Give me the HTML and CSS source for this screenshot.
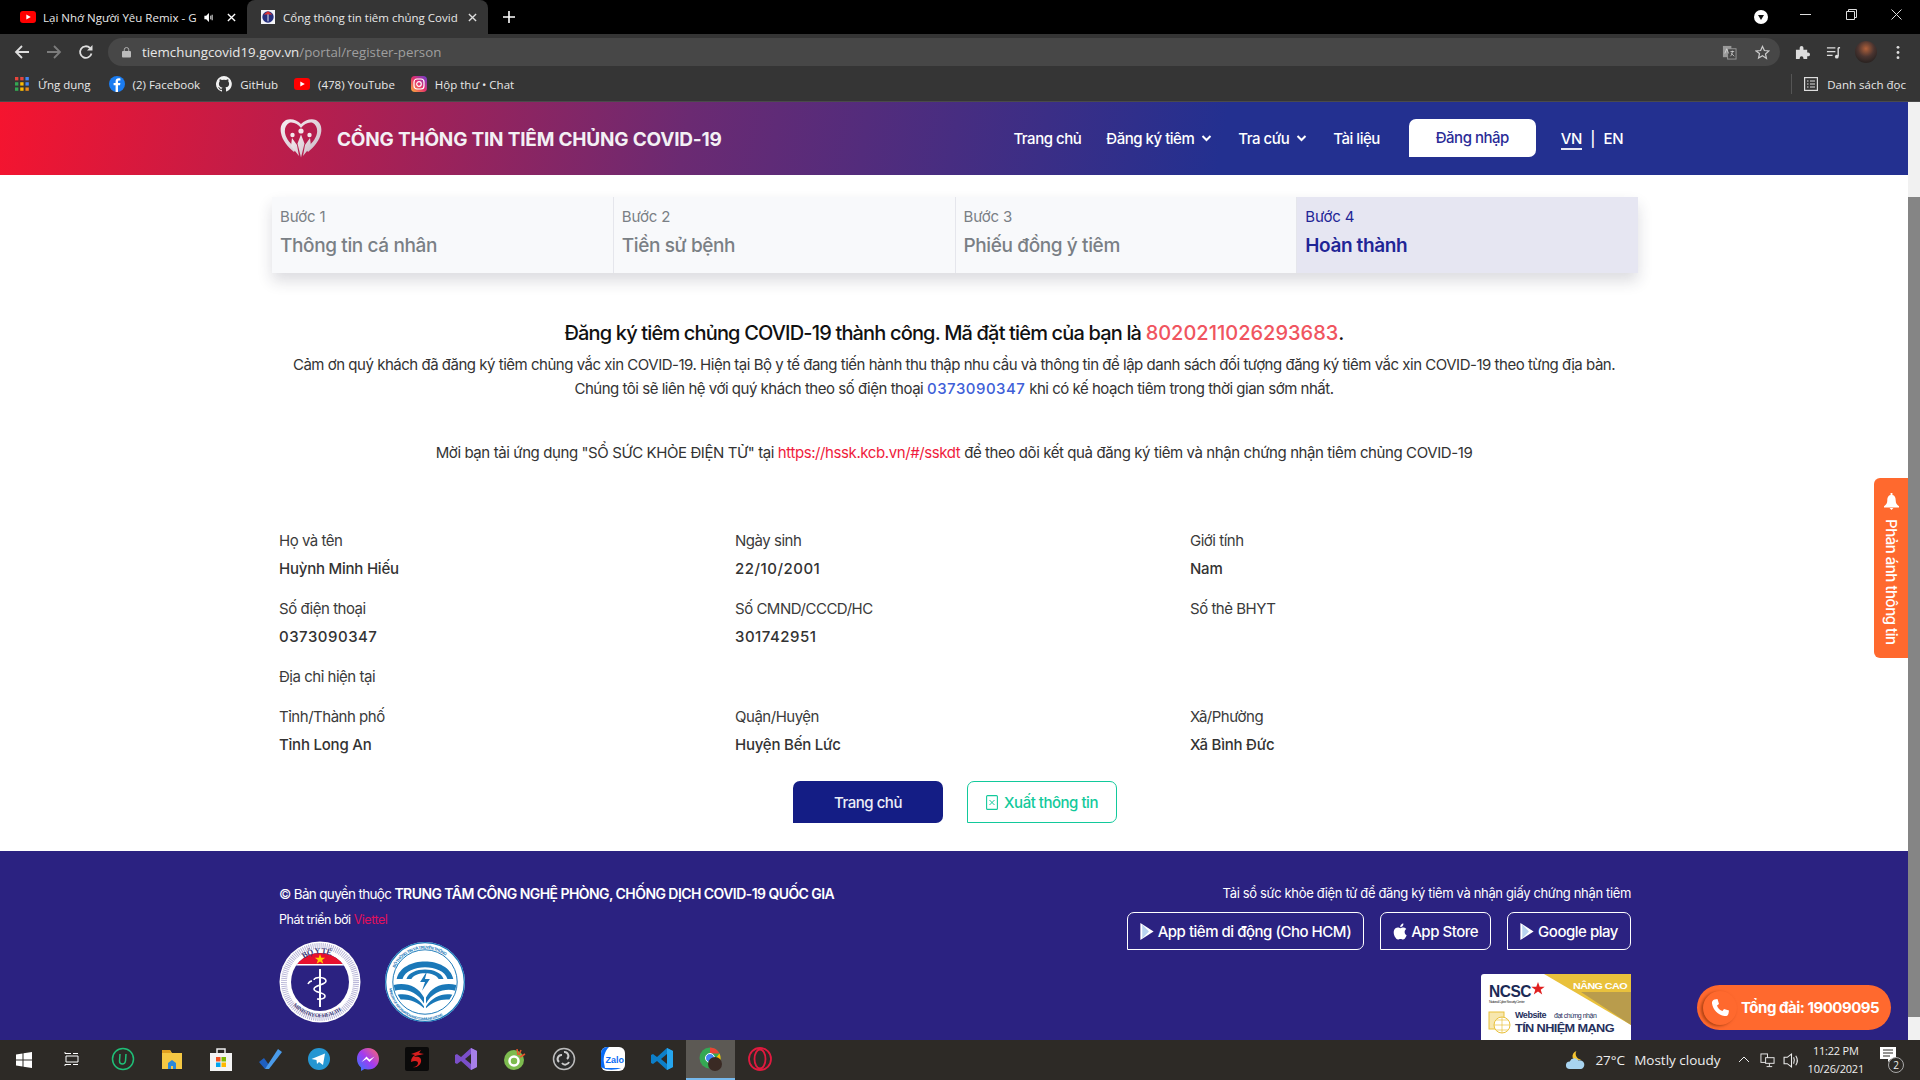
FILE: index.html

```html
<!DOCTYPE html>
<html lang="vi">
<head>
  <meta charset="UTF-8">
  <title>Cổng thông tin tiêm chủng Covid-19</title>
  <link rel="stylesheet" href="styles.css">
</head>
<body>
  <!-- browser chrome -->
  <div class="tabbar">
    <div class="tab">
      <svg class="fav" viewBox="0 0 16 12"><rect width="16" height="12" rx="3" fill="#f00"/><path d="M6.3 3.4v5.2L10.8 6z" fill="#fff"/></svg>
      <span class="tab-title">Lại Nhớ Người Yêu Remix - G</span>
      <svg class="tab-sound" viewBox="0 0 9 12"><path d="M0 4h2l3-3v10L2 8H0z" fill="#fff"/><path d="M7 4v4M8.5 3v6" stroke="#fff" fill="none"/></svg>
      <svg class="tab-x" viewBox="0 0 10 10"><path d="M1 1l8 8M9 1L1 9" stroke="#fff" stroke-width="1.5"/></svg>
    </div>
    <div class="tab active">
      <svg class="fav" viewBox="0 0 16 16"><rect width="16" height="16" fill="#f4f4f8"/><circle cx="8" cy="8" r="6.5" fill="#27307f"/><path d="M3 5h10L8 1.5z" fill="#d33"/><path d="M8 5v8" stroke="#fff"/></svg>
      <span class="tab-title">Cổng thông tin tiêm chủng Covid</span>
      <svg class="tab-x" viewBox="0 0 10 10"><path d="M1 1l8 8M9 1L1 9" stroke="#ddd" stroke-width="1.5"/></svg>
    </div>
    <svg class="newtab" viewBox="0 0 12 12"><path d="M6 0v12M0 6h12" stroke="#fff" stroke-width="1.6"/></svg>
    <div class="winctl">
      <svg class="media-dot" viewBox="0 0 14 14"><circle cx="7" cy="7" r="7" fill="#fff"/><path d="M4 5h6L7 10z" fill="#111"/></svg>
      <svg class="winbtn win-min" viewBox="0 0 11 11"><path d="M0 5.5h11" stroke="#ddd"/></svg>
      <svg class="winbtn win-max" viewBox="0 0 11 11"><path d="M.5 2.5h8v8h-8zM2.5 2.500v-2h8v8h-2" stroke="#ddd" fill="none"/></svg>
      <svg class="winbtn win-close" viewBox="0 0 11 11"><path d="M.5.5l10 10M10.5.5l-10 10" stroke="#ddd"/></svg>
    </div>
  </div>

  <div class="toolbar">
    <svg class="nav-ic" viewBox="0 0 16 16"><path d="M15 8H2M8 2L2 8l6 6" stroke="#dedede" stroke-width="1.8" fill="none"/></svg>
    <svg class="nav-ic" viewBox="0 0 16 16"><path d="M1 8h13M8 2l6 6-6 6" stroke="#7c7c7c" stroke-width="1.8" fill="none"/></svg>
    <svg class="nav-ic" viewBox="0 0 16 16"><path d="M13.5 9.5A5.8 5.8 0 1 1 12 4" stroke="#dedede" stroke-width="1.8" fill="none"/><path d="M14.5 1v5.5H9z" fill="#dedede"/></svg>
    <div class="omnibox">
      <svg class="lock" viewBox="0 0 10 12"><path d="M2.5 5V3.500a2.500 2.500 0 0 1 5 0V5" stroke="#bbb" fill="none"/><rect y="5" width="10" height="7" rx="1" fill="#bbb"/></svg>
      <span class="url">tiemchungcovid19.gov.vn<span class="url-path">/portal/register-person</span></span>
      <svg class="omni-ic" viewBox="0 0 16 16"><rect x="1" y="1" width="9" height="12" fill="#999"/><rect x="6" y="4" width="9" height="11" fill="#474747" stroke="#999"/><path d="M3 9l2-5 2 5M9 7h4M11 6v1c0 2-1 4-2 5M10 9l3 3" stroke="#ddd" fill="none" stroke-width=".8"/></svg>
      <svg class="omni-ic star" viewBox="0 0 16 16"><path d="M8 1.5l2 4.400 4.800.5-3.600 3.200 1 4.700L8 11.400l-4.200 2.400 1-4.700L1.200 6.400 6 5.900z" stroke="#ccc" stroke-width="1.3" fill="none"/></svg>
    </div>
    <svg class="tool-ic puzzle" viewBox="0 0 16 16"><path d="M1 5h4V3a2 2 0 0 1 4 0v2h4v3h1a2 2 0 0 1 0 4h-1v3H9v-1a2 2 0 0 0-4 0v1H1z" fill="#ddd"/></svg>
    <svg class="tool-ic music" viewBox="0 0 16 16"><path d="M1 3h9M1 7h9M1 11h6" stroke="#ddd" stroke-width="1.4"/><path d="M13 3v9M13 3h2" stroke="#ddd" stroke-width="1.5"/><circle cx="11.5" cy="12.5" r="2" fill="#ddd"/></svg>
    <div class="avatar"></div>
    <svg class="tool-ic dots" viewBox="0 0 4 16"><circle cx="2" cy="2.5" r="1.5" fill="#ddd"/><circle cx="2" cy="8" r="1.5" fill="#ddd"/><circle cx="2" cy="13.5" r="1.5" fill="#ddd"/></svg>
  </div>

  <div class="bookmarks">
    <svg class="bm-ic apps" viewBox="0 0 15 15">
      <rect width="3.6" height="3.6" fill="#e8453c"/><rect x="5.6" width="3.6" height="3.6" fill="#e8453c"/><rect x="11.2" width="3.6" height="3.6" fill="#4285f4"/>
      <rect y="5.6" width="3.6" height="3.6" fill="#34a853"/><rect x="5.6" y="5.6" width="3.6" height="3.6" fill="#fbbc05"/><rect x="11.2" y="5.6" width="3.6" height="3.6" fill="#4285f4"/>
      <rect y="11.2" width="3.6" height="3.6" fill="#34a853"/><rect x="5.6" y="11.2" width="3.6" height="3.6" fill="#fbbc05"/><rect x="11.2" y="11.2" width="3.6" height="3.6" fill="#ea8a1a"/>
    </svg>
    <span class="bm">Ứng dụng</span>
    <svg class="bm-ic" viewBox="0 0 16 16"><circle cx="8" cy="8" r="8" fill="#1b7cf0"/><path d="M9 16V9.300h2l.4-2.300H9V5.600c0-.7.3-1.100 1.200-1.100h1.200V2.500C11 2.400 10.300 2.300 9.700 2.300 7.800 2.300 6.600 3.500 6.600 5.300V7H4.600v2.300h2V16z" fill="#fff"/></svg>
    <span class="bm">(2) Facebook</span>
    <svg class="bm-ic" viewBox="0 0 16 16"><path fill="#f2f2f2" d="M8 0a8 8 0 0 0-2.500 15.600c.4.100.5-.2.500-.4v-1.400c-2.200.5-2.700-1-2.700-1-.4-.9-.9-1.200-.9-1.200-.7-.5.100-.5.100-.5.800.100 1.200.8 1.200.8.700 1.200 1.900.9 2.300.7.100-.5.300-.9.500-1.100-1.800-.2-3.600-.9-3.600-4 0-.9.300-1.600.8-2.100-.1-.2-.4-1 .1-2.100 0 0 .7-.2 2.200.8a7.600 7.600 0 0 1 4 0c1.500-1 2.200-.8 2.200-.8.400 1.100.2 1.900.1 2.100.5.600.8 1.300.8 2.100 0 3.100-1.900 3.700-3.700 3.900.3.300.6.700.6 1.500v2.200c0 .2.100.5.600.4A8 8 0 0 0 8 0z"/></svg>
    <span class="bm">GitHub</span>
    <svg class="bm-ic" viewBox="0 0 16 12"><rect width="16" height="12" rx="3" fill="#f00"/><path d="M6.3 3.4v5.2L10.8 6z" fill="#fff"/></svg>
    <span class="bm">(478) YouTube</span>
    <svg class="bm-ic" viewBox="0 0 16 16"><defs><linearGradient id="ig" x1="0" y1="1" x2="1" y2="0"><stop offset="0" stop-color="#fdb13b"/><stop offset=".5" stop-color="#e4306c"/><stop offset="1" stop-color="#6a3fd6"/></linearGradient></defs><rect width="16" height="16" rx="4" fill="url(#ig)"/><rect x="3" y="3" width="10" height="10" rx="3" fill="none" stroke="#fff" stroke-width="1.2"/><circle cx="8" cy="8" r="2.3" fill="none" stroke="#fff" stroke-width="1.2"/></svg>
    <span class="bm">Hộp thư • Chat</span>
    <div class="reading">
      <svg class="bm-ic" viewBox="0 0 14 14"><rect x=".6" y=".6" width="12.8" height="12.8" fill="none" stroke="#ddd" stroke-width="1.2"/><path d="M3 4h1.500M6 4h5M3 7h1.500M6 7h5M3 10h1.500M6 10h5" stroke="#ddd" stroke-width="1.2"/></svg>
      <span class="bm">Danh sách đọc</span>
    </div>
  </div>

  <div class="viewport">
    <main class="page">
      <header class="site-head">
        <div class="brand">
          <svg class="brand-logo" viewBox="0 0 42 39">
            <defs><linearGradient id="silver" x1="0" y1="0" x2="1" y2="1"><stop offset="0" stop-color="#f6eef1"/><stop offset="1" stop-color="#cdbcc8"/></linearGradient></defs>
            <path fill="url(#silver)" fill-rule="evenodd" d="M21 5C25 1 31-1 36 1c5 3 6 8 5 13-1 7-7 14-13 19l-2-3c5-5 10-10 11-16 .6-4-.5-8-4-10-4-1.500-9 1-12 5-3-4-8-6.500-12-5-3.500 2-4.600 6-4 10 1 6 6 11 11 16l-2 3C8 28 2 21 1 14 0 9 1 4 6 1c5-2 11 0 15 4z"/>
            <circle cx="21" cy="12" r="2.6" fill="#f2e8ec"/><circle cx="12.5" cy="16" r="2.2" fill="#f2e8ec"/><circle cx="29.5" cy="16" r="2.2" fill="#f2e8ec"/>
            <path d="M21 15.500l-3.500 9 3.500 14 3.500-14zM12 19l5 7 2 11-8-10zM30 19l-5 7-2 11 8-10z" fill="url(#silver)"/>
          </svg>
          <span class="brand-name">CỔNG THÔNG TIN TIÊM CHỦNG COVID-19</span>
        </div>
        <nav class="main-nav">
          <a class="nav-link">Trang chủ</a>
          <a class="nav-link has-caret">Đăng ký tiêm <svg class="caret" viewBox="0 0 10 7"><path d="M1 1l4 4 4-4" stroke="#fff" stroke-width="2" fill="none"/></svg></a>
          <a class="nav-link has-caret">Tra cứu <svg class="caret" viewBox="0 0 10 7"><path d="M1 1l4 4 4-4" stroke="#fff" stroke-width="2" fill="none"/></svg></a>
          <a class="nav-link">Tài liệu</a>
          <a class="login-btn">Đăng nhập</a>
          <div class="lang"><span class="lang-on">VN</span><span>|</span><span>EN</span></div>
        </nav>
      </header>

      <div class="steps">
        <div class="step"><div class="step-no">Bước 1</div><div class="step-name">Thông tin cá nhân</div></div>
        <div class="step"><div class="step-no">Bước 2</div><div class="step-name">Tiền sử bệnh</div></div>
        <div class="step"><div class="step-no">Bước 3</div><div class="step-name">Phiếu đồng ý tiêm</div></div>
        <div class="step current"><div class="step-no">Bước 4</div><div class="step-name">Hoàn thành</div></div>
      </div>

      <section class="message">
        <h2 class="msg-title">Đăng ký tiêm chủng COVID-19 thành công. Mã đặt tiêm của bạn là <span class="code">8020211026293683</span>.</h2>
        <p class="msg-line">Cảm ơn quý khách đã đăng ký tiêm chủng vắc xin COVID-19. Hiện tại Bộ y tế đang tiến hành thu thập nhu cầu và thông tin để lập danh sách đối tượng đăng ký tiêm vắc xin COVID-19 theo từng địa bàn.</p>
        <p class="msg-line">Chúng tôi sẽ liên hệ với quý khách theo số điện thoại <span class="phone">0373090347</span> khi có kế hoạch tiêm trong thời gian sớm nhất.</p>
        <p class="msg-line invite">Mời bạn tải ứng dụng "SỔ SỨC KHỎE ĐIỆN TỬ" tại <span class="link-red">https://hssk.kcb.vn/#/sskdt</span> để theo dõi kết quả đăng ký tiêm và nhận chứng nhận tiêm chủng COVID-19</p>
      </section>

      <section class="info">
        <div class="field"><div class="f-label">Họ và tên</div><div class="f-value">Huỳnh Minh Hiếu</div></div>
        <div class="field"><div class="f-label">Ngày sinh</div><div class="f-value num">22/10/2001</div></div>
        <div class="field"><div class="f-label">Giới tính</div><div class="f-value">Nam</div></div>
        <div class="field"><div class="f-label">Số điện thoại</div><div class="f-value num">0373090347</div></div>
        <div class="field"><div class="f-label">Số CMND/CCCD/HC</div><div class="f-value num">301742951</div></div>
        <div class="field"><div class="f-label">Số thẻ BHYT</div><div class="f-value"></div></div>
        <div class="field wide"><div class="f-label">Địa chỉ hiện tại</div></div>
        <div class="field"><div class="f-label">Tỉnh/Thành phố</div><div class="f-value">Tỉnh Long An</div></div>
        <div class="field"><div class="f-label">Quận/Huyện</div><div class="f-value">Huyện Bến Lức</div></div>
        <div class="field"><div class="f-label">Xã/Phường</div><div class="f-value">Xã Bình Đức</div></div>
      </section>

      <div class="actions">
        <a class="btn btn-home">Trang chủ</a>
        <a class="btn btn-export"><svg class="xls" viewBox="0 0 12 15"><rect x=".6" y=".6" width="10.8" height="13.8" rx="1" fill="none" stroke="#12c99b" stroke-width="1.1"/><path d="M3.500 5l5 5M8.500 5l-5 5" stroke="#12c99b"/></svg>Xuất thông tin</a>
      </div>

      <footer class="site-foot">
        <div class="foot-left">
          <div class="copy">© Bản quyền thuộc <b class="copy-org">TRUNG TÂM CÔNG NGHỆ PHÒNG, CHỐNG DỊCH COVID-19 QUỐC GIA</b></div>
          <div class="dev">Phát triển bởi <span class="viettel">Viettel</span></div>
          <div class="seals">
            <svg class="seal" viewBox="0 0 82 82">
              <defs><clipPath id="sealclip"><circle cx="41" cy="41" r="29"/></clipPath></defs>
              <circle cx="41" cy="41" r="40.5" fill="#fff"/>
              <circle cx="41" cy="41" r="36" fill="none" stroke="#b9b7d8" stroke-width="6" stroke-dasharray="1 1"/>
              <circle cx="41" cy="41" r="31" fill="#fff"/>
              <circle cx="41" cy="41" r="29" fill="#2b2281"/>
              <g clip-path="url(#sealclip)"><rect x="10" y="10" width="62" height="13" fill="#e8112d"/><rect x="10" y="23" width="62" height="1.5" fill="#fff"/></g>
              <path d="M41 13l1.300 3.700h3.900l-3.100 2.300 1.200 3.700-3.300-2.300-3.300 2.300 1.200-3.700-3.100-2.300h3.900z" fill="#fc0"/>
              <path d="M41 28v38" stroke="#fff" stroke-width="2"/>
              <path d="M35 39c0-4 12-3 12 1s-12 4-12 8 11 3 11 7-8 3-8 3M33 40c-2 0-3 1-4 3" stroke="#fff" stroke-width="1.6" fill="none"/>
              <path id="sealtop" d="M15 30A28 28 0 0 1 67 30" fill="none"/>
              <text font-size="8" font-weight="700" fill="#3d3a78" font-family="Liberation Serif"><textPath href="#sealtop" startOffset="24%">BỘ Y TẾ</textPath></text>
              <path id="sealbot" d="M7 52A36 36 0 0 0 75 52" fill="none"/>
              <text font-size="5.5" font-weight="700" fill="#3d3a78" font-family="Liberation Serif"><textPath href="#sealbot" startOffset="16%">MINISTRY OF HEALTH</textPath></text>
            </svg>
            <svg class="seal seal-ict" viewBox="0 0 84 82">
              <circle cx="42" cy="41" r="41" fill="#fff"/>
              <circle cx="42" cy="41" r="40.3" fill="none" stroke="#1a78b8" stroke-width="1.3"/>
              <circle cx="42" cy="41" r="33" fill="#fff" stroke="#1a78b8"/>
              <path id="ictop" d="M8 41a34 34 0 0 1 68 0" fill="none"/>
              <text font-size="4.3" font-weight="700" fill="#1a78b8" font-family="Liberation Sans"><textPath href="#ictop" startOffset="14%">BỘ THÔNG TIN VÀ TRUYỀN THÔNG</textPath></text>
              <path id="icbot" d="M5 43a37 37 0 0 0 74 0" fill="none"/>
              <text font-size="3.6" font-weight="700" fill="#1a78b8" font-family="Liberation Sans"><textPath href="#icbot" startOffset="4%">MINISTRY OF INFORMATION AND COMMUNICATIONS</textPath></text>
              <path d="M13 38C18 14 66 14 71 38h-6C60 22 24 22 19 38z" fill="#1a78b8"/>
              <path d="M23 38C27 25 57 25 61 38h-5C52 30 32 30 28 38z" fill="#1a78b8"/>
              <path d="M44 30l-7 11h5l-3 9 8-12h-5z" fill="#1a78b8"/>
              <path d="M10 44c12-3 25 1 31 13v6C34 51 21 47 11 50zM74 44c-12-3-25 1-31 13v6c7-12 20-16 30-13zM14 54c10-2 20 2 27 12v2C34 61 25 58 17 59zM70 54c-10-2-20 2-27 12v2c7-7 16-10 24-9z" fill="#1a78b8"/>
            </svg>
          </div>
        </div>
        <div class="foot-right">
          <div class="foot-hint">Tải sổ sức khỏe điện tử để đăng ký tiêm và nhận giấy chứng nhận tiêm</div>
          <div class="stores">
            <a class="store"><svg class="store-ic" viewBox="0 0 14 18"><path d="M0 0l14 9L0 18z" fill="#fff"/><path d="M2 1.500L9 9l-7 7.500" fill="#b9d4f0"/></svg>App tiêm di động (Cho HCM)</a>
            <a class="store"><svg class="store-ic" viewBox="0 0 14 17"><path fill="#fff" d="M11.600 9c0-2 1.600-2.900 1.700-3-1-1.300-2.400-1.500-2.900-1.500-1.200-.1-2.400.7-3 .7s-1.600-.7-2.600-.7C3.400 4.500 2.100 5.300 1.400 6.500c-1.400 2.400-.4 6 1 8 .7 1 1.500 2 2.500 2 1 0 1.400-.6 2.600-.6s1.500.6 2.600.6 1.800-1 2.400-2c.8-1.100 1.100-2.200 1.100-2.300-.1 0-2-.8-2-3.200zM9.600 3.100C10.200 2.400 10.500 1.500 10.400.5 9.600.5 8.700 1 8.100 1.700 7.600 2.300 7.100 3.200 7.300 4.200c.9 0 1.800-.5 2.300-1.100z"/></svg>App Store</a>
            <a class="store"><svg class="store-ic" viewBox="0 0 14 18"><path d="M0 0l14 9L0 18z" fill="#fff"/><path d="M2 1.500L9 9l-7 7.500" fill="#b9d4f0"/></svg>Google play</a>
          </div>
          <div class="ncsc">
            <svg class="ncsc-art" viewBox="0 0 150 66">
              <rect width="150" height="68" rx="3" fill="#fff"/>
              <path d="M63 0h87v51z" fill="#e9c13c"/>
              <path d="M100 18h50v33z" fill="#b99c4c"/>
              <text x="8" y="23" font-size="16" font-weight="700" fill="#1b2a55" font-family="Liberation Sans" textLength="42" lengthAdjust="spacingAndGlyphs">NCSC</text>
              <path d="M57 8l1.700 4.800h5l-4 3 1.500 4.800-4.200-3-4.200 3 1.500-4.800-4-3h5z" fill="#e02020"/>
              <text x="92" y="15" font-size="9" font-weight="700" fill="#fff" font-family="Liberation Sans" textLength="54" lengthAdjust="spacingAndGlyphs">NÂNG CAO</text>
              <text x="8" y="29" font-size="3.6" fill="#333" font-family="Liberation Sans">National Cyber Security Center</text>
              <rect x="8" y="38" width="15" height="17" fill="#f7e7ae" stroke="#e9c13c"/>
              <circle cx="21" cy="51" r="8" fill="#fff" stroke="#e9c13c"/>
              <path d="M13 51h16M21 43v16M15 46h12M15 56h12" stroke="#e9c13c" stroke-width=".7"/>
              <text x="34" y="44" font-size="9" font-weight="700" fill="#26305d" font-family="Liberation Sans">Website</text>
              <text x="73" y="44" font-size="7" fill="#26305d" font-family="Liberation Sans">đạt chứng nhận</text>
              <text x="34" y="58" font-size="10" font-weight="700" fill="#26305d" font-family="Liberation Sans" textLength="99" lengthAdjust="spacingAndGlyphs">TÍN NHIỆM MẠNG</text>
            </svg>
          </div>
        </div>
      </footer>

      <a class="feedback"><svg class="bell" viewBox="0 0 16 18"><path d="M7 0h2v2c3 .7 3.500 3.500 3.500 6 0 2.500 1 4.500 3.500 6v1.500H0V14c2.500-1.500 3.500-3.500 3.500-6S4 2.700 7 2z" fill="#fff"/><path d="M6 16h4l-2 2z" fill="#fff"/></svg><span class="fb-text">Phản ánh thông tin</span></a>
      <a class="hotline"><span class="hot-circle"><svg class="hot-ic" viewBox="0 0 20 20"><path fill="#fff" d="M4.500 1.500L7.500 1 9 6 7 7.500c.5 2.500 3 5 5.500 5.500L14 11l5 1.500-.5 3c-.3 1.800-2 3-4 2.500C8 17 3 12 2 5.500c-.3-2 .8-3.600 2.500-4z"/></svg></span>Tổng đài: 19009095</a>
    </main>
    <div class="scrollbar"><div class="thumb"></div></div>
  </div>

  <div class="taskbar">
    <div class="start"><svg class="start-ic" viewBox="0 0 16 16"><path d="M0 2.500l6.500-1v6H0zM7.500 1.300L16 0v7.500H7.500zM0 8.500h6.500v6l-6.500-1zM7.500 8.500H16V16l-8.500-1.300z" fill="#fff"/></svg></div>
    <div class="slot task-view"><svg class="t-ic small" viewBox="0 0 16 16"><path d="M1 1v1.500h6M9 2.500h5M2 5h12v6H2zM1 15v-1.500h6M9 13.500h5" stroke="#fff" fill="none"/></svg></div>
    <div class="slot"><svg class="t-ic" viewBox="0 0 24 24"><circle cx="12" cy="12" r="10.500" stroke="#1fbf77" stroke-width="1.5" fill="none"/><path d="M9 7l-.5 7c0 4 5.500 4 6 0l.5-7" stroke="#1fbf77" stroke-width="1.5" fill="none"/></svg></div>
    <div class="slot"><svg class="t-ic" viewBox="0 0 24 24"><path d="M2 3h8l2 3h10v16H2z" fill="#f5c843"/><path d="M2 3h8l1 3H2z" fill="#e0a020"/><path d="M8 16l4-3 4 3v6h-3v-3h-2v3H8z" fill="#2b88d8"/></svg></div>
    <div class="slot"><svg class="t-ic" viewBox="0 0 24 24"><path d="M8 6V2h8v4" stroke="#eee" stroke-width="1.5" fill="none"/><rect x="1" y="6" width="22" height="18" fill="#f4f4f4"/><rect x="7" y="10" width="4.500" height="4.500" fill="#f25022"/><rect x="12.500" y="10" width="4.500" height="4.500" fill="#7fba00"/><rect x="7" y="15.500" width="4.500" height="4.500" fill="#00a4ef"/><rect x="12.500" y="15.500" width="4.500" height="4.500" fill="#ffb900"/></svg></div>
    <div class="slot"><svg class="t-ic" viewBox="0 0 24 24"><path d="M1 15l5-4 5 7-4 4z" fill="#1f5fbf"/><path d="M7 22L20 2l4 3-13 17z" fill="#4a9bea"/></svg></div>
    <div class="slot"><svg class="t-ic" viewBox="0 0 24 24"><circle cx="12" cy="12" r="11" fill="#2596d2"/><path d="M4.500 12L18 6.500 16 18l-4-3-2 2-.5-4z" fill="#fff"/></svg></div>
    <div class="slot"><svg class="t-ic" viewBox="0 0 24 24"><defs><linearGradient id="ms" x1="0" y1="1" x2="1" y2="0"><stop offset="0" stop-color="#2a7bff"/><stop offset=".5" stop-color="#a33bf0"/><stop offset="1" stop-color="#ff6a68"/></linearGradient></defs><path d="M12 1C5 1 1 6 1 12c0 3.500 1.500 6.500 4 8.500V24l3.500-2c1 .3 2.300.5 3.500.5 7 0 11-5 11-10.500S19 1 12 1z" fill="url(#ms)"/><path d="M5.500 15l5-5.500 3 3 5-3-5 5.500-3-3z" fill="#fff"/></svg></div>
    <div class="slot"><svg class="t-ic" viewBox="0 0 24 24"><rect width="24" height="24" rx="2" fill="#0a0a0a"/><path d="M6 7c4-1 8-3 10-4l-2 3 5 1-4 1c-3 0-5 1-6 2 4-1 8 0 7 5-1 4-5 6-8 5 3 0 5-2 5-4 0-2-3-3-7-1 0-4 2-6 4-7z" fill="#d81e1e"/></svg></div>
    <div class="slot"><svg class="t-ic" viewBox="0 0 24 24"><path d="M17 1l6 3v16l-6 3-10-9-4 3-2-1V8l2-1 4 3z" fill="#7b4fc9"/><path d="M17 7v10l-6-5z" fill="#2d2a26"/><path d="M17 1l6 3v16l-6 3z" fill="#a67fe8"/></svg></div>
    <div class="slot"><svg class="t-ic" viewBox="0 0 24 24"><circle cx="11" cy="13" r="10" fill="#7dbb4f"/><circle cx="11" cy="14" r="4.500" fill="none" stroke="#fff" stroke-width="2.5"/><path d="M14 2l1 6M18 3l-2 5M22 7l-5 3" stroke="#e8552b" stroke-width="1.5"/></svg></div>
    <div class="slot"><svg class="t-ic" viewBox="0 0 24 24"><circle cx="12" cy="12" r="10.500" fill="#2c2c2c" stroke="#bbb" stroke-width="1.5"/><path d="M12 5a4 4 0 0 1 3 7M7 15a4 4 0 0 1 3-7M17 15a4 4 0 0 1-7 1" stroke="#ccc" stroke-width="2" fill="none"/></svg></div>
    <div class="slot"><svg class="t-ic" viewBox="0 0 24 24"><rect width="24" height="24" rx="6" fill="#fff"/><path d="M0 20V6a6 6 0 0 1 6-6h2C4 4 2 10 3 16l1 5h16c-5 2-14 3-20-1z" fill="#0a6cf5"/><text x="4.500" y="15.500" font-size="9" font-weight="700" fill="#0a6cf5" font-family="Liberation Sans">Zalo</text></svg></div>
    <div class="slot"><svg class="t-ic" viewBox="0 0 24 24"><path d="M17 1l6 3v16l-6 3L7 14l-4 3-2-1V8l2-1 4 3z" fill="#0d7fc9"/><path d="M17 7v10l-6-5z" fill="#2d2a26"/><path d="M17 1l6 3v16l-6 3z" fill="#26a5ee"/></svg></div>
    <div class="slot on"><svg class="t-ic" viewBox="0 0 24 24"><circle cx="11" cy="11" r="10.500" fill="#34a853"/><path d="M11 .5a10.500 10.500 0 0 1 9.500 6H11z" fill="#ea4335"/><path d="M20.500 6.500a10.500 10.500 0 0 1-8 15L16 12z" fill="#fbbc05"/><circle cx="11" cy="11" r="4.500" fill="#4285f4" stroke="#fff"/><circle cx="16" cy="17" r="7" fill="#3a2a24"/></svg></div>
    <div class="slot"><svg class="t-ic" viewBox="0 0 24 24"><circle cx="12" cy="12" r="11" fill="none" stroke="#e01a3f" stroke-width="1.8"/><ellipse cx="12" cy="12" rx="5.500" ry="9.500" fill="none" stroke="#e01a3f" stroke-width="1.8"/></svg></div>
    <div class="tray">
      <svg class="weather" viewBox="0 0 22 22"><path d="M12 1a6 6 0 0 0 5 9 7 7 0 0 1-9-2 6 6 0 0 1 4-7z" fill="#f4c430"/><path d="M5 20a4 4 0 0 1 0-8 5 5 0 0 1 9-1 4.500 4.500 0 0 1 3 9z" fill="#a8d4f0"/></svg>
      <span class="temp">27°C</span>
      <span class="weather-text">Mostly cloudy</span>
      <svg class="tray-ic tray-up" viewBox="0 0 12 12"><path d="M1 8l5-5 5 5" stroke="#eee" fill="none"/></svg>
      <svg class="tray-ic tray-net" viewBox="0 0 16 16"><rect x="1" y="1" width="7" height="9" fill="none" stroke="#eee"/><rect x="6" y="5" width="9" height="6" fill="#2d2a26" stroke="#eee"/><path d="M10 11v3M7 14.500h6" stroke="#eee"/></svg>
      <svg class="tray-ic tray-vol" viewBox="0 0 16 16"><path d="M1 5h3l4-3v12l-4-3H1z" fill="none" stroke="#eee"/><path d="M10 5c1 2 1 4 0 6M12 3.500c2 3 2 6 0 9" stroke="#eee" fill="none"/></svg>
      <div class="clock"><div>11:22 PM</div><div>10/26/2021</div></div>
      <div class="notif">
        <svg class="notif-ic" viewBox="0 0 16 16"><path d="M0 0h16v12h-5l-3 3v-3H0z" fill="#fff"/><path d="M3 3h10M3 6h10M3 9h7" stroke="#2d2a26"/></svg>
        <span class="notif-num">2</span>
      </div>
    </div>
  </div>
</body>
</html>
```

FILE: styles.css

```css
* { box-sizing: border-box; }
html, body { margin: 0; height: 1080px; overflow: hidden; }
body { width: 1920px; display: flex; flex-direction: column; font-family: Inter, "Noto Sans", sans-serif; background: #fff; color: #1d1d1f; }
svg { display: block; flex: none; }
b { font-weight: 600; }

/* browser chrome */
.tabbar { height: 34px; flex: none; background: #000; display: flex; align-items: flex-end; padding-left: 8px; font: 11.5px "Open Sans", sans-serif; color: #e8e8e8; }
.tab { width: 239px; height: 34px; display: flex; align-items: center; padding: 0 11px 0 12px; border-radius: 8px 8px 0 0; }
.tab.active { width: 241px; background: #353535; padding-left: 13px; }
.fav { width: 16px; height: 14px; margin-right: 7px; }
.tab-title { flex: 1; white-space: nowrap; }
.tab-sound { width: 9px; height: 11px; margin-right: 14px; }
.tab-x { width: 9px; height: 9px; }
.newtab { width: 12px; height: 12px; margin: 0 0 11px 15px; }
.winctl { margin-left: auto; height: 34px; display: flex; align-items: center; }
.media-dot { width: 14px; height: 14px; }
.winbtn { width: 11px; height: 11px; margin-bottom: 6px; }
.win-min { margin-left: 32px; }
.win-max { margin-left: 35px; }
.win-close { margin-left: 34px; margin-right: 18px; }

.toolbar { height: 36px; flex: none; background: #353535; display: flex; align-items: center; padding-left: 14px; }
.nav-ic { width: 16px; height: 16px; margin-right: 16px; }
.omnibox { width: 1672px; height: 28px; margin-left: -2px; background: #474747; border-radius: 14px; display: flex; align-items: center; padding: 0 10px 0 14px; }
.lock { width: 9px; height: 12px; margin-right: 11px; }
.url { flex: 1; font: 13.3px "Open Sans", sans-serif; color: #e8e8e8; }
.url-path { color: #9f9f9f; }
.omni-ic { width: 15px; height: 15px; }
.omni-ic.star { margin-left: 18px; }
.tool-ic { width: 15px; height: 15px; }
.puzzle { margin-left: 15px; }
.music { margin-left: 16px; }
.avatar { width: 22px; height: 22px; margin-left: 14px; border-radius: 50%; background: radial-gradient(circle at 50% 35%, #b0603a, #4a3430 45%, #2c2422 75%); }
.dots { width: 4px; margin-left: 19px; }

.bookmarks { height: 32px; flex: none; background: #353535; border-bottom: 1px solid #4a4a4a; display: flex; align-items: center; padding: 0 0 3px 15px; font: 11.5px "Open Sans", sans-serif; color: #e8e8e8; }
.bm-ic { width: 16px; height: 16px; margin-right: 8px; }
.bm { margin-right: 16px; white-space: nowrap; }
.bm-ic.apps { width: 14px; height: 14px; margin-right: 9px; }
.apps + .bm { margin-right: 18px; }
.reading { margin-left: auto; height: 20px; display: flex; align-items: center; border-left: 1px solid #555; padding-left: 12px; }
.reading .bm { margin-right: 14px; }
.reading .bm-ic { width: 14px; height: 14px; margin-right: 9px; }

/* page */
.viewport { flex: 1; display: flex; min-height: 0; position: relative; }
.page { flex: 1; min-width: 0; overflow: hidden; display: flex; flex-direction: column; letter-spacing: -.03em; }
.scrollbar { width: 12px; background: #f1f1f1; padding-top: 95px; }
.thumb { height: 820px; background: #858585; }

.site-head { height: 73px; flex: none; padding: 0 285px 0 280px; display: flex; align-items: center; justify-content: space-between; color: #fff; background: linear-gradient(100deg, #f5142f 0%, #6b2a72 36%, #233090 64%); }
.brand { display: flex; align-items: center; }
.brand-logo { width: 42px; height: 39px; margin-right: 15px; }
.brand-name { font-size: 19px; font-weight: 700; letter-spacing: -.2px; color: #f3f0f4; white-space: nowrap; margin-top: 2px; }
.main-nav { display: flex; align-items: center; font-size: 15px; font-weight: 500; }
.nav-link { display: flex; align-items: center; margin-right: 25px; white-space: nowrap; }
.nav-link.has-caret { margin-right: 26px; }
.caret { width: 11px; height: 7px; margin-left: 7px; }
.login-btn { width: 127px; height: 38px; margin: -1px 25px 0 4px; padding-bottom: 2px; display: flex; align-items: center; justify-content: center; background: #fff; color: #2a2b97; border-radius: 7px 7px 7px 0; }
.lang { display: flex; gap: 8.5px; margin-top: 2px; }
.lang-on { border-bottom: 2px solid #e8e8f4; }

.steps { width: 1366px; height: 76px; flex: none; margin: 22px 0 0 272px; display: flex; box-shadow: 0 8px 14px rgba(40, 40, 60, .16); }
.step { flex: 1; padding: 10px 8px; background: #f8f9fb; border-right: 1px solid #e5e6ec; color: #7a7f85; }
.step-no { font-size: 15px; line-height: 20px; letter-spacing: -.01em; }
.step-name { font-size: 19px; line-height: 26px; margin-top: 6px; font-weight: 500; letter-spacing: -.02em; }
.step.current { background: #e6e6f2; border-right: 0; color: #1f2596; }
.step.current .step-name { font-weight: 600; }

.message { margin: 45px 279px 0 279px; text-align: center; }
.msg-title { margin: 0; font-size: 20px; line-height: 30px; font-weight: 500; letter-spacing: -.042em; color: #111; }
.code { color: #f0555f; letter-spacing: 0; }
.msg-line { margin: 0; font-size: 15px; line-height: 24px; color: #333; }
.msg-title + .msg-line { margin-top: 5px; }
.invite { margin-top: 40px; letter-spacing: -.027em; }
.phone { color: #3f5fd8; font-weight: 500; letter-spacing: .5px; }
.link-red { color: #ef1c3c; }

.info { margin: 64px 0 0 279px; width: 1366px; display: grid; grid-template-columns: 456px 455px 455px; }
.field { height: 68px; font-size: 15px; line-height: 24px; }
.field.wide { grid-column: 1 / -1; height: 40px; }
.f-label { color: #3b3b3b; }
.f-value { margin-top: 4px; font-weight: 500; color: #333; letter-spacing: -.015em; }
.f-value.num { letter-spacing: .5px; }

.actions { margin-top: 8px; display: flex; justify-content: center; gap: 24px; padding-left: 2px; }
.btn { width: 150px; height: 42px; display: flex; align-items: center; justify-content: center; font-size: 15px; font-weight: 500; border-radius: 7px 7px 7px 0; }
.btn-home { background: #141d85; color: #ecedf7; }
.btn-export { border: 1px solid #12c99b; color: #12c99b; }
.xls { width: 12px; height: 15px; margin-right: 6px; }

.site-foot { margin-top: 28px; flex: 1; min-height: 0; padding: 30px 277px 0 279px; display: flex; justify-content: space-between; background: #2b2281; color: #fff; }
.copy { font-size: 13.5px; line-height: 26px; letter-spacing: -.05em; }
.copy-org { font-size: 14px; font-weight: 600; letter-spacing: -.04em; }
.dev { font-size: 12.5px; line-height: 18px; margin-top: 4px; }
.viettel { color: #e0105c; }
.seals { display: flex; gap: 23px; margin-top: 12px; }
.seal { width: 82px; height: 82px; }
.foot-right { display: flex; flex-direction: column; align-items: flex-end; }
.foot-hint { font-size: 13px; line-height: 24px; letter-spacing: -.027em; }
.stores { display: flex; gap: 16px; margin-top: 7px; }
.store { height: 38px; padding: 0 12px; display: flex; align-items: center; border: 1px solid #fff; border-radius: 7px 7px 7px 0; font-size: 15px; font-weight: 500; white-space: nowrap; }
.store-ic { width: 14px; height: 17px; margin-right: 4px; }
.ncsc { width: 150px; height: 66px; margin-top: 24px; }
.ncsc-art { width: 150px; height: 66px; }

.feedback { position: absolute; right: 12px; top: 376px; width: 34px; height: 180px; background: #ff692e; border-radius: 6px 0 0 6px; color: #fff; display: flex; flex-direction: column; align-items: center; padding-top: 15px; font-size: 15px; font-weight: 500; }
.bell { width: 15px; height: 17px; margin-bottom: 9px; }
.fb-text { writing-mode: vertical-rl; white-space: nowrap; }
.hotline { position: absolute; left: 1697px; bottom: 10px; width: 194px; height: 45px; background: #ff692e; border-radius: 23px; display: flex; align-items: center; padding-left: 6px; color: #fff; font-size: 15px; font-weight: 700; white-space: nowrap; }
.hot-circle { width: 34px; height: 34px; margin-right: 4px; display: flex; align-items: center; justify-content: center; border-radius: 50%; background: #ff692e; box-shadow: -2px 1px 3px rgba(120, 40, 0, .6); }
.hot-ic { width: 20px; height: 20px; }

/* windows taskbar */
.taskbar { height: 40px; flex: none; background: #2d2a26; display: flex; align-items: center; color: #eee; font: 13.5px "Open Sans", sans-serif; }
.start { width: 47px; display: flex; justify-content: center; }
.start-ic { width: 16px; height: 16px; }
.slot { width: 49px; height: 40px; display: flex; align-items: center; justify-content: center; border-bottom: 2px solid transparent; }
.slot.task-view { margin-right: 2px; }
.slot.on { background: #5c5954; border-bottom-color: #76b9ed; }
.t-ic { width: 24px; height: 24px; }
.t-ic.small { width: 16px; height: 16px; }
.tray { margin-left: auto; display: flex; align-items: center; height: 40px; }
.weather { width: 21px; height: 21px; }
.temp { margin-left: 9px; }
.weather-text { margin-left: 9px; }
.tray-ic { width: 15px; height: 15px; }
.tray-up { width: 12px; height: 12px; margin-left: 17px; }
.tray-net { margin-left: 10px; }
.tray-vol { width: 17px; height: 17px; margin-left: 8px; }
.clock { margin-left: 8px; text-align: center; font-size: 11px; line-height: 18px; letter-spacing: -.2px; }
.notif { position: relative; margin: 0 16px; width: 24px; height: 26px; }
.notif-ic { width: 16px; height: 16px; }
.notif-num { position: absolute; right: 0; bottom: 0; width: 16px; height: 16px; border-radius: 50%; background: #2d2a26; border: 1px solid #aaa; font-size: 10px; line-height: 14px; text-align: center; }
```
